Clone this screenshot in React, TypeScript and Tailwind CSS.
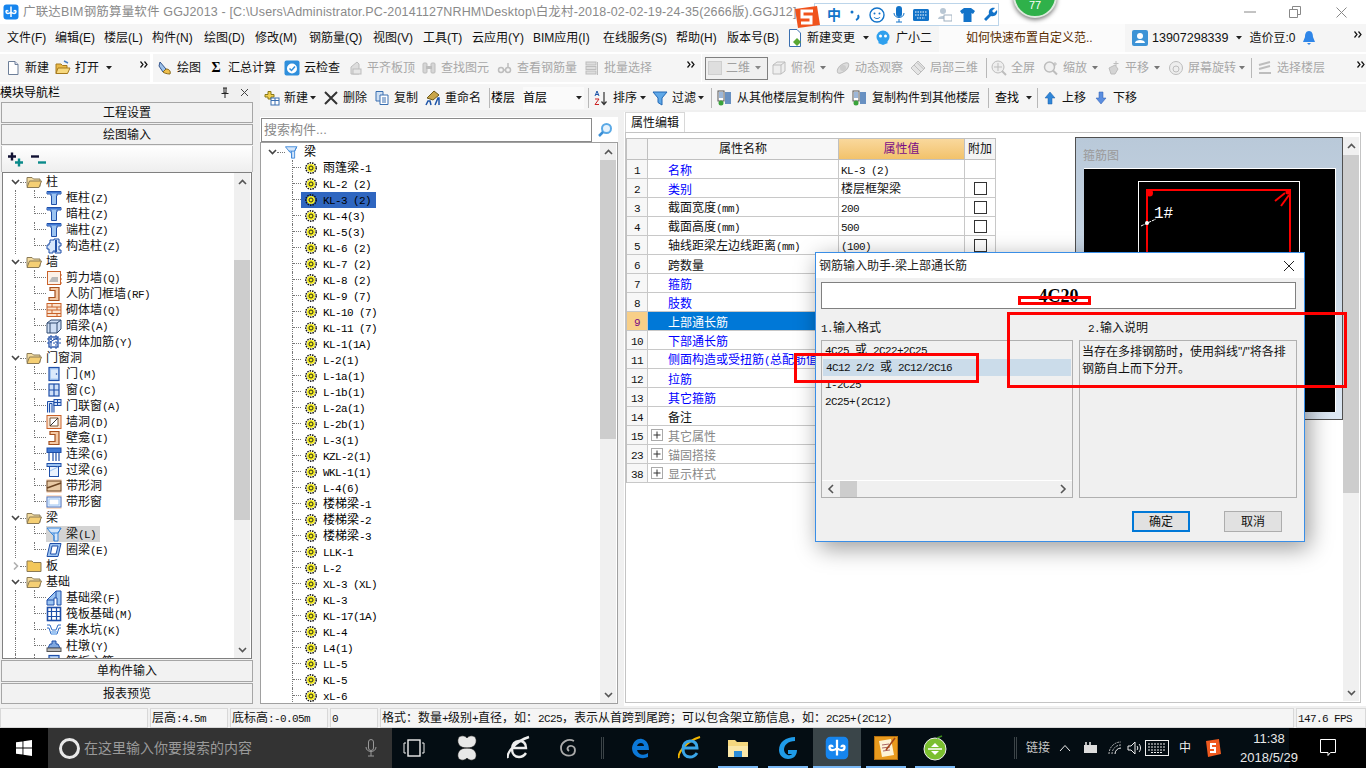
import React from "react";

function M({ t }: { t: string }) {
  const parts = t.split(/([\x20-\x7e]+)/);
  return (
    <span className="whitespace-pre">
      {parts.map((p, i) =>
        /^[\x20-\x7e]+$/.test(p) ? (
          <span key={i} className="text-[11px] tracking-[-0.6px] font-['Liberation_Mono',monospace]">{p}</span>
        ) : (
          <span key={i}>{p}</span>
        )
      )}
    </span>
  );
}

function S({ children, w = 16, h = 16, vb = "0 0 16 16", cls = "" }: { children: React.ReactNode; w?: number; h?: number; vb?: string; cls?: string }) {
  return (
    <svg width={w} height={h} viewBox={vb} className={"shrink-0 " + cls}>
      {children}
    </svg>
  );
}

function Caret({ cls = "" }: { cls?: string }) {
  return (
    <S w={6} h={4} vb="0 0 6 4" cls={cls}>
      <path d="M0 0H6L3 3.5Z" fill="#222" />
    </S>
  );
}

function More({ cls = "" }: { cls?: string }) {
  return (
    <S w={8} h={7} vb="0 0 8 7" cls={cls}>
      <path d="M0.5 0.5L3 3.5L0.5 6.5M4.5 0.5L7 3.5L4.5 6.5" fill="none" stroke="#111" strokeWidth="1.2" />
    </S>
  );
}

function Logo({ size = 16 }: { size?: number }) {
  return (
    <S w={size} h={size}>
      <rect x="0.5" y="0.5" width="15" height="15" rx="3" fill="#1685ee" />
      <path d="M8 2.5V13M3 7.5C3 10 6 10 8 8C10 10 13 10 13 7.5C13 6 11 6 11 7.5M3 7.5C3 6 5 6 5 7.5" fill="none" stroke="#fff" strokeWidth="1.5" />
    </S>
  );
}

const G = "#bdbdbd";

function ToolIcon({ k }: { k: string }) {
  switch (k) {
    case "doc":
      return <S><path d="M3.5 1.5H10L13 4.5V14.5H3.5Z" fill="#fff" stroke="#6d7f99" /><path d="M10 1.5V4.5H13" fill="#dde" stroke="#6d7f99" /></S>;
    case "open":
      return <S><path d="M1 4H6L7.5 5.5H12V13.5H1Z" fill="#e9b949" stroke="#a67a1e" /><path d="M3 8H15L12.5 13.5H1Z" fill="#f7d97f" stroke="#a67a1e" /><path d="M9 1L13 3" stroke="#4a7fc1" strokeWidth="1.5" /></S>;
    case "draw":
      return <S><path d="M3 2L9 9L6 12L2 6Z" fill="#9cc1ea" stroke="#34558c" /><path d="M9 9C12 9 14 11 13 14C10 14 7 13 6 12Z" fill="#f0c04d" stroke="#8a6a1a" /></S>;
    case "sigma":
      return <span className="w-4 text-center text-[14px] font-bold leading-none font-['Liberation_Serif',serif] text-black">Σ</span>;
    case "cloud":
      return <S><rect x="0.5" y="0.5" width="15" height="15" rx="2" fill="#2f8fdc" /><circle cx="8" cy="8.5" r="5" fill="#fff" /><path d="M5.5 8.5L7.5 10.5L11 6.5" fill="none" stroke="#2f8fdc" strokeWidth="1.5" /></S>;
    case "g1":
      return <S><path d="M4 14V7L10 2L12 4V14Z" fill="#ddd" stroke={G} /><rect x="6" y="9" width="8" height="5" fill="#e6e6e6" stroke={G} /></S>;
    case "g2":
      return <S><rect x="2" y="3" width="4" height="10" rx="1" fill="#d6d6d6" stroke={G} /><rect x="10" y="3" width="4" height="10" rx="1" fill="#d6d6d6" stroke={G} /><rect x="5" y="6" width="6" height="3" fill={G} /></S>;
    case "g3":
      return <S><circle cx="4" cy="10" r="2.5" fill="none" stroke={G} strokeWidth="1.5" /><circle cx="11" cy="10" r="2.5" fill="none" stroke={G} strokeWidth="1.5" /><path d="M6 10H9M11 8V3" stroke={G} strokeWidth="1.5" /></S>;
    case "g4":
      return <S><rect x="2" y="2" width="10" height="3" fill="#ddd" stroke={G} /><rect x="2" y="6.5" width="10" height="3" fill="#ddd" stroke={G} /><rect x="2" y="11" width="10" height="3" fill="#ddd" stroke={G} /><path d="M13.5 2V15" stroke={G} /></S>;
    case "cube":
      return <S><path d="M2 5L6 2H14V11L10 14H2Z" fill="#eee" stroke={G} /><path d="M2 5H10V14M10 5L14 2" fill="none" stroke={G} /></S>;
    case "orbit":
      return <S><ellipse cx="8" cy="8" rx="7" ry="3.5" transform="rotate(-40 8 8)" fill="#ddd" stroke={G} /><circle cx="8" cy="8" r="3" fill="#ccc" /></S>;
    case "local":
      return <S><path d="M8 1L15 8L8 15L1 8Z" fill="#e4e4e4" stroke={G} /><path d="M4 5L11 12M7 2.5L13.5 9" stroke={G} /></S>;
    case "full":
      return <S><circle cx="7" cy="7" r="6" fill="#eee" stroke={G} /><path d="M7 3V11M3 7H11" stroke={G} /><path d="M11 11L15 15" stroke={G} strokeWidth="2" /></S>;
    case "zoom":
      return <S><circle cx="6.5" cy="7" r="5" fill="#f0f0f0" stroke={G} strokeWidth="1.5" /><path d="M10 10.5L14 14.5" stroke={G} strokeWidth="2" /><path d="M12 2V6M10 4H14" stroke={G} /></S>;
    case "pan":
      return <S><path d="M4 8L10 5L13 9L10 14H6Z" fill="#d4d4d4" stroke={G} /><path d="M11 1V6M8.5 3.5H13.5" stroke={G} /></S>;
    case "rotate":
      return <S><circle cx="8" cy="8" r="6.5" fill="#eee" stroke={G} /><circle cx="8" cy="9" r="3" fill="none" stroke={G} /></S>;
    case "floors":
      return <S><path d="M2 5L13 2M2 9L13 6M2 13H14" stroke={G} strokeWidth="2" /></S>;
    case "new":
      return <S><path d="M4 1.5H7V4.5H10V7H7V9H4V7H1V4.5H4Z" fill="#f2d04f" stroke="#8a7a1a" /><rect x="7" y="8" width="8" height="7" fill="#fff" stroke="#3a6fb0" /><path d="M7 10.5H15M11 8V15" stroke="#3a6fb0" /></S>;
    case "x":
      return <S><path d="M2 2L14 14M14 2L2 14" stroke="#333" strokeWidth="2" /></S>;
    case "copy":
      return <S><path d="M2 1.5H9V11H2Z" fill="#cfe0f3" stroke="#3a6fb0" /><path d="M6 5H14V14.5H6Z" fill="#fff" stroke="#3a6fb0" /><path d="M8 8H12M8 10H12M8 12H12" stroke="#3a6fb0" /></S>;
    case "rename":
      return <S><path d="M2 8L9 1L14 5L8 10Z" fill="#c9a64a" stroke="#6e5a1a" /><path d="M1 15L3 11H5L6 15M10 15L13 8H14V15" fill="none" stroke="#1f55a8" strokeWidth="1.5" /></S>;
    case "sort":
      return <S><path d="M2 6L4 1L6 6M2.8 4.5H5.2" fill="none" stroke="#1f55a8" /><path d="M2 9H6L2 14.5H6" fill="none" stroke="#c22" /><path d="M11 2V14M8.5 11.5L11 14.5L13.5 11.5" fill="none" stroke="#333" strokeWidth="1.2" /></S>;
    case "filter":
      return <S><path d="M1 2H15L10 8V15L6 12.5V8Z" fill="#5fa8e8" stroke="#2268b5" /></S>;
    case "stackA":
      return <S><rect x="1" y="1" width="6" height="10" fill="#fff" stroke="#555" /><path d="M2 3H6M2 5H6M2 7H6" stroke="#3a6fb0" /><path d="M9 2V14M11 2V14M13 2V14" stroke="#3a6fb0" strokeWidth="1.5" /><circle cx="4" cy="13" r="2.5" fill="#3aa33a" /></S>;
    case "up":
      return <S><path d="M8 2L13 8H10V14H6V8H3Z" fill="#2f86d8" stroke="#1e5fa8" strokeWidth="0.5" /></S>;
    case "down":
      return <S><path d="M8 14L13 8H10V2H6V8H3Z" fill="#5b8ee0" stroke="#2a5ab0" strokeWidth="0.5" /></S>;
    default:
      return <S><rect x="2" y="2" width="12" height="12" fill="none" stroke={G} /></S>;
  }
}

function Btn({ w, k, t, off, caret }: { w: string; k: string; t: string; off?: boolean; caret?: string }) {
  return (
    <div className={"flex items-center shrink-0 " + w}>
      <span className="w-4 flex justify-center shrink-0"><ToolIcon k={k} /></span>
      <span className={"ml-1 whitespace-nowrap " + (off ? "text-[#a8a8a8]" : "text-[#111]")}>{t}</span>
      {caret && <Caret cls={caret} />}
    </div>
  );
}

function Sep({ cls = "" }: { cls?: string }) {
  return <div className={"w-px h-5 bg-[#b8b8b8] shrink-0 " + cls} />;
}

const menuItems: [string, string][] = [
  ["文件(F)", "w-[48px]"], ["编辑(E)", "w-[49px]"], ["楼层(L)", "w-[48px]"], ["构件(N)", "w-[52px]"],
  ["绘图(D)", "w-[51px]"], ["修改(M)", "w-[54px]"], ["钢筋量(Q)", "w-[64px]"], ["视图(V)", "w-[50px]"],
  ["工具(T)", "w-[49px]"], ["云应用(Y)", "w-[61px]"], ["BIM应用(I)", "w-[70px]"], ["在线服务(S)", "w-[73px]"],
  ["帮助(H)", "w-[51px]"], ["版本号(B)", "w-[60px]"],
];

function TreeIcon({ k }: { k: string }) {
  const b = "#1f4fa8";
  const l = "#9cc4f2";
  const o = "#c9622a";
  switch (k) {
    case "t":
      return <S><path d="M1 1.5H15V4H11V6H10.5V14.5H5.5V6H5V4H1Z" fill={l} stroke={b} /><rect x="1.5" y="2" width="13" height="1.5" fill="#3f78d4" /></S>;
    case "gz":
      return <S><path d="M4 2H8V1H13V5H15V8H13V12H15V15H9V13H7V15H3V11H1V7H3V5H4Z" fill="#d7e6fa" stroke={b} /><path d="M10 2V14" stroke={b} strokeWidth="2" /></S>;
    case "w1":
      return <S><rect x="1.5" y="1.5" width="13" height="13" fill="#fdf2e8" stroke={o} /><path d="M3 12L12 12L12 7L6 7Z" fill="#b9b9b9" /><path d="M14 5H16M14 9H16M14 13H16" stroke={o} /></S>;
    case "w2":
      return <S><path d="M4 1.5H13V14.5H3V11.5H9V4.5H4Z" fill="#f5c9a4" stroke="#a5501e" strokeWidth="1.2" /></S>;
    case "brick":
      return <S><rect x="1" y="1.5" width="14" height="13" fill="#fbe3cf" stroke={o} /><path d="M1 5H15M1 8H15M1 11.5H15M6 1.5V5M11 5V8M6 8V11.5M11 11.5V14.5" stroke={o} /></S>;
    case "beam3d":
      return <S><path d="M1 5L5 2H15V11L11 15H1Z" fill="#cfdff5" stroke="#314a70" /><path d="M1 5H11V15M11 5L15 2M4 5V15" fill="none" stroke="#314a70" /></S>;
    case "rebar":
      return <S><rect x="3" y="3" width="9" height="10" fill="#fff" stroke={b} strokeWidth="1.3" /><path d="M1 5H15M1 9H15M5 1V15M10 1V15" stroke={b} strokeDasharray="2 1" /><path d="M4 8L11 4" stroke={b} /></S>;
    case "door":
      return <S><rect x="3" y="1.5" width="10" height="13" fill="#a9c9f2" stroke={b} strokeWidth="1.2" /><rect x="5" y="3.5" width="7" height="9" fill="#dbe9fb" /><circle cx="10.5" cy="8" r="0.8" fill={b} /></S>;
    case "win":
      return <S><rect x="3" y="2" width="10" height="12" fill="#cfe0f8" stroke={b} strokeWidth="1.2" /><path d="M8 2V14M3 8H13" stroke={b} strokeWidth="1.2" /></S>;
    case "dw":
      return <S><path d="M1.5 14.5V3.5H8V14.5M3.5 14.5V5.5H6V14.5" fill="#d8e6fa" stroke={b} /><rect x="8" y="1.5" width="7" height="6" fill="#cfe0f8" stroke={b} /><path d="M11.5 1.5V7.5M8 4.5H15" stroke={b} /></S>;
    case "hole":
      return <S><rect x="1" y="1.5" width="14" height="13" fill="#fbe3cf" stroke={o} /><path d="M4 4H12V12H4Z" fill="#fff" stroke="#7a5a3a" /><path d="M4 12L12 4" stroke="#333" /></S>;
    case "lian":
      return <S><rect x="1" y="2" width="14" height="4.5" fill="#3f78d4" stroke={b} /><path d="M3 6V15M7 6V15M10 6V15M13 6V15" stroke={b} strokeWidth="1.2" /></S>;
    case "guo":
      return <S><rect x="1" y="1.5" width="14" height="3" fill="#9cc4f2" stroke={b} /><rect x="3.5" y="4.5" width="9" height="10" fill="#eaf2fd" stroke={b} /><path d="M4 9L12 5" stroke={l} /></S>;
    case "b1":
      return <S><rect x="0.5" y="1" width="15" height="14" fill="#fbdcc5" /><rect x="1" y="3" width="14" height="10" fill="#e8c9a4" stroke="#6b4422" /><path d="M1 10L15 5" stroke="#6b4422" strokeWidth="1.5" /></S>;
    case "b2":
      return <S><rect x="0.5" y="1" width="15" height="14" fill="#fbdcc5" /><rect x="1" y="3" width="14" height="10" fill="#eaf2fd" stroke="#4a78c8" /><rect x="3" y="5" width="10" height="6" fill="#fff" stroke="#9cc4f2" /></S>;
    case "liang":
      return <S><path d="M1 2H15L12 7V15H8V10L5 7Z" fill="#d4e6fb" stroke="#3a86d8" /><path d="M5 7H12L15 2M8 7V15" fill="none" stroke="#3a86d8" /></S>;
    case "quan":
      return <S><path d="M4 1.5H15L12 14.5H1Z" fill="#9cc4f2" stroke={b} /><path d="M6 4H12L10 12H4.5Z" fill="#fff" stroke={b} /></S>;
    case "jcl":
      return <S><path d="M1 15V10L10 1H15V15H11V8H8V15Z" fill="#9cc4f2" stroke={b} /><path d="M10 1V8M1 10H8" stroke={b} /></S>;
    case "fab":
      return <S><rect x="1.5" y="1.5" width="13" height="13" fill="#fff" stroke={b} strokeWidth="1.6" /><path d="M5.5 1.5V14.5M10.5 1.5V14.5M1.5 5.5H14.5M1.5 10.5H14.5" stroke={b} strokeWidth="1.2" /></S>;
    case "jsk":
      return <S><path d="M1 3H4L6 8H10L12 3H15M1 6H3L5 12H11L13 6H15" fill="none" stroke="#2e6bc4" /><path d="M5 9H11L10 13H6Z" fill="#9cc4f2" /></S>;
    case "zd":
      return <S><path d="M6 3H10V6H12L14 10H2L4 6H6Z" fill="#7fa8e0" stroke={b} /><rect x="1" y="10" width="14" height="3.5" fill="#bbb" stroke="#555" /></S>;
    default:
      return <S><rect x="2" y="2" width="12" height="12" fill="#fff" stroke={b} /></S>;
  }
}

function Folder({ open }: { open: boolean }) {
  return (
    <S>
      {open ? (
        <>
          <path d="M1 3.5H6L7.5 5H14V12.5H1Z" fill="#f3dca0" stroke="#8b7a55" />
          <path d="M3.5 7H15.5L13 13.5H1Z" fill="#f5cf74" stroke="#8b7a55" />
        </>
      ) : (
        <path d="M1 3H6L7.5 4.5H15V13.5H1Z" fill="#f3c75a" stroke="#8b7a55" />
      )}
    </S>
  );
}

function Chev({ open }: { open: boolean }) {
  return (
    <S w={9} h={8} vb="0 0 9 8">
      {open ? (
        <path d="M1 2L4.5 5.5L8 2" fill="none" stroke="#444" strokeWidth="1.6" />
      ) : (
        <path d="M3 0.5L6.5 4L3 7.5" fill="none" stroke="#b0b0b0" strokeWidth="1.6" />
      )}
    </S>
  );
}

type Node = { t: string; k?: string; last?: boolean; closed?: boolean; sel?: boolean };

const leftTree: Node[] = [
  { t: "柱" }, { t: "框柱(Z)", k: "t" }, { t: "暗柱(Z)", k: "t" }, { t: "端柱(Z)", k: "t" }, { t: "构造柱(Z)", k: "gz", last: true },
  { t: "墙" }, { t: "剪力墙(Q)", k: "w1" }, { t: "人防门框墙(RF)", k: "w2" }, { t: "砌体墙(Q)", k: "brick" }, { t: "暗梁(A)", k: "beam3d" }, { t: "砌体加筋(Y)", k: "rebar", last: true },
  { t: "门窗洞" }, { t: "门(M)", k: "door" }, { t: "窗(C)", k: "win" }, { t: "门联窗(A)", k: "dw" }, { t: "墙洞(D)", k: "hole" }, { t: "壁龛(I)", k: "w2" }, { t: "连梁(G)", k: "lian" }, { t: "过梁(G)", k: "guo" }, { t: "带形洞", k: "b1" }, { t: "带形窗", k: "b2", last: true },
  { t: "梁" }, { t: "梁(L)", k: "liang", sel: true }, { t: "圈梁(E)", k: "quan", last: true },
  { t: "板", closed: true },
  { t: "基础" }, { t: "基础梁(F)", k: "jcl" }, { t: "筏板基础(M)", k: "fab" }, { t: "集水坑(K)", k: "jsk" }, { t: "柱墩(Y)", k: "zd" }, { t: "筏板主筋(R)", k: "door" },
];

const midItems = [
  "雨篷梁-1", "KL-2 (2)", "KL-3 (2)", "KL-4(3)", "KL-5(3)", "KL-6 (2)", "KL-7 (2)", "KL-8 (2)", "KL-9 (7)", "KL-10 (7)", "KL-11 (7)", "KL-1(1A)",
  "L-2(1)", "L-1a(1)", "L-1b(1)", "L-2a(1)", "L-2b(1)", "L-3(1)", "KZL-2(1)", "WKL-1(1)", "L-4(6)", "楼梯梁-1", "楼梯梁-2", "楼梯梁-3", "LLK-1", "L-2", "XL-3 (XL)", "KL-3", "KL-17(1A)", "KL-4", "L4(1)", "LL-5", "KL-5", "xL-6",
];

function ScrollV({ spacer, thumb, cls }: { spacer: string; thumb: string; cls: string }) {
  return (
    <div className={"flex flex-col bg-[#f0f0f0] shrink-0 " + cls}>
      <div className="h-[17px] flex items-center justify-center shrink-0">
        <S w={9} h={6} vb="0 0 9 6"><path d="M1 5L4.5 1.5L8 5" fill="none" stroke="#555" strokeWidth="1.6" /></S>
      </div>
      <div className={"shrink-0 " + spacer} />
      <div className={"bg-[#cdcdcd] shrink-0 " + thumb} />
      <div className="flex-1" />
      <div className="h-[17px] flex items-center justify-center shrink-0">
        <S w={9} h={6} vb="0 0 9 6"><path d="M1 1L4.5 4.5L8 1" fill="none" stroke="#555" strokeWidth="1.6" /></S>
      </div>
    </div>
  );
}

function LeftRow({ n }: { n: Node }) {
  if (!n.k) {
    return (
      <div className="h-4 flex items-center shrink-0">
        <span className="w-[9px] ml-[8px] flex justify-center"><Chev open={!n.closed} /></span>
        <span className="w-[6px] h-0 border-t border-dotted border-[#777]" />
        <Folder open={!n.closed} />
        <span className="ml-[4px]">{n.t}</span>
      </div>
    );
  }
  return (
    <div className="h-4 flex shrink-0">
      <div className="ml-[12px] w-[19px] h-4 border-l border-dotted border-[#777] shrink-0" />
      <div className={"w-[12px] h-2 border-l border-b border-dotted border-[#777] shrink-0"} />
      <div className={"flex items-center h-4 pr-[4px] " + (n.sel ? "bg-[#d4d4d4]" : "")}>
        <TreeIcon k={n.k} />
        <span className="ml-[4px] whitespace-nowrap"><M t={n.t} /></span>
      </div>
    </div>
  );
}

function LeftPanel() {
  const btn = "h-[21px] mx-[1px] mb-[1px] border border-[#a6a6a6] bg-[#f2f2f2] flex items-center justify-center text-[#111] shrink-0";
  return (
    <div className="w-[254px] shrink-0 flex flex-col">
      <div className="h-[17px] flex items-center text-[12px] text-black shrink-0 bg-[#f0f0f0]">
        <span>模块导航栏</span>
        <span className="ml-auto"><S w={10} h={11} vb="0 0 10 11"><path d="M3 1H7M4 1V6H6V1M1.5 6.5H8.5M5 6.5V11" fill="none" stroke="#222" /></S></span>
        <span className="ml-[10px] mr-[5px]"><S w={9} h={9} vb="0 0 9 9"><path d="M1 1L8 8M8 1L1 8" stroke="#444" /></S></span>
      </div>
      <div className={btn + " mt-[1px]"}>工程设置</div>
      <div className={btn}>绘图输入</div>
      <div className="h-[26px] mx-[1px] bg-gradient-to-b from-white to-[#eeeeee] border-x border-[#c0c0c0] flex items-center pl-[5px] gap-[6px] shrink-0">
        <S w={17} h={15} vb="0 0 17 15"><path d="M1 4.5H9M5 0.5V8.5" stroke="#113" strokeWidth="2.4" /><path d="M8 10.5H16M12 6.5V14.5" stroke="#0a8a8a" strokeWidth="2.4" /></S>
        <S w={17} h={15} vb="0 0 17 15"><path d="M1 4.5H9" stroke="#113" strokeWidth="2.4" /><path d="M8 10.5H16" stroke="#0a8a8a" strokeWidth="2.4" /></S>
      </div>
      <div className="h-[487px] mx-[2px] border border-[#808080] flex bg-white shrink-0 overflow-hidden">
        <div className="flex-1 pt-[1px] overflow-hidden flex flex-col text-[#111]">
          {leftTree.map((n, i) => <LeftRow key={i} n={n} />)}
        </div>
        <ScrollV cls="w-[16px] h-full mr-px" spacer="h-[70px]" thumb="h-[260px]" />
      </div>
      <div className={btn + " mt-[1px] h-[22px]"}>单构件输入</div>
      <div className={btn}>报表预览</div>
    </div>
  );
}

function MidPanel() {
  return (
    <div className="w-[358px] shrink-0 flex flex-col mt-[7px]">
      <div className="h-[25px] flex items-center shrink-0 bg-white">
        <div className="w-[331px] ml-px h-[24px] border border-[#8a8a8a] text-[#8a8a8a] text-[13px] flex items-center pl-[2px]">搜索构件...</div>
        <S w={16} h={16} cls="ml-[5px]"><circle cx="9.5" cy="6.5" r="4.5" fill="#e6f2fc" stroke="#5aa9e6" strokeWidth="2" /><path d="M6 10L2 14" stroke="#3b8fd6" strokeWidth="2.5" /></S>
      </div>
      <div className="h-[562px] border border-[#a0a0a0] flex bg-white shrink-0 overflow-hidden">
        <div className="flex-1 overflow-hidden flex flex-col pt-px text-black">
          <div className="h-4 flex items-center shrink-0">
            <span className="ml-[7px] w-[9px]"><Chev open /></span>
            <span className="w-[8px] h-0 border-t border-dotted border-[#777]" />
            <S w={14} h={16}><path d="M0.5 2H13.5L11 7V15H7.5V10L4.5 7Z" fill="#d4e6fb" stroke="#3a86d8" /><path d="M4.5 7H11L13.5 2M7.5 7V15" fill="none" stroke="#3a86d8" /></S>
            <span className="ml-[5px]">梁</span>
          </div>
          {midItems.map((t, i) => (
            <div key={i} className="h-4 flex shrink-0">
              <div className="ml-[31px] w-[9px] border-l border-dotted border-[#777] h-4 shrink-0 flex">
                <div className="w-full h-2 border-b border-dotted border-[#777]" />
              </div>
              <div className={"flex items-center h-4 pl-[4px] pr-[5px] " + (i === 2 ? "bg-[#2f66c0]" : "")}>
                <S w={12} h={12} vb="0 0 12 12">
                  <circle cx="6" cy="6" r="5.2" fill="none" stroke="#111" strokeWidth="1.5" strokeDasharray="1.5 1" />
                  <circle cx="6" cy="6" r="4" fill="#f6ef1f" />
                  <circle cx="6" cy="6" r="2" fill="none" stroke="#222" />
                </S>
                <span className="ml-[6px] whitespace-nowrap"><M t={t} /></span>
              </div>
            </div>
          ))}
        </div>
        <ScrollV cls="w-[16px] h-full mr-px" spacer="h-0" thumb="h-[279px]" />
      </div>
    </div>
  );
}

type R = { n: string; c: string; name: string; v?: string; box?: boolean; plus?: boolean; sel?: boolean };
const rows: R[] = [
  { n: "1", c: "text-[#0000ff]", name: "名称", v: "KL-3 (2)" },
  { n: "2", c: "text-[#0000ff]", name: "类别", v: "楼层框架梁", box: true },
  { n: "3", c: "text-[#111]", name: "截面宽度(mm)", v: "200", box: true },
  { n: "4", c: "text-[#111]", name: "截面高度(mm)", v: "500", box: true },
  { n: "5", c: "text-[#111]", name: "轴线距梁左边线距离(mm)", v: "(100)", box: true },
  { n: "6", c: "text-[#111]", name: "跨数量" },
  { n: "7", c: "text-[#0000ff]", name: "箍筋" },
  { n: "8", c: "text-[#0000ff]", name: "肢数" },
  { n: "9", c: "text-white", name: "上部通长筋", sel: true },
  { n: "10", c: "text-[#0000ff]", name: "下部通长筋" },
  { n: "11", c: "text-[#0000ff]", name: "侧面构造或受扭筋(总配筋值)" },
  { n: "12", c: "text-[#0000ff]", name: "拉筋" },
  { n: "13", c: "text-[#0000ff]", name: "其它箍筋" },
  { n: "14", c: "text-[#111]", name: "备注" },
  { n: "15", c: "text-[#888888]", name: "其它属性", plus: true },
  { n: "23", c: "text-[#888888]", name: "锚固搭接", plus: true },
  { n: "38", c: "text-[#888888]", name: "显示样式", plus: true },
];

function PropTable() {
  return (
    <div className="w-[370px] mt-[5px] border-l border-[#c0c0c0] shrink-0 self-start">
      <div className="h-[22px] flex border-y border-[#c0c0c0] text-[#111]">
        <div className="w-[21px] border-r border-[#c0c0c0] bg-[#f4f4f4]" />
        <div className="w-[191px] border-r border-[#c0c0c0] bg-[#f7f7f7] flex items-center justify-center">属性名称</div>
        <div className="w-[126px] border-r border-[#c0c0c0] bg-gradient-to-b from-[#f9d89c] to-[#f2c26a] flex items-center justify-center text-[#7a0c86]">属性值</div>
        <div className="w-[31px] border-r border-[#c0c0c0] bg-[#f4f4f4] flex items-center justify-center">附加</div>
      </div>
      {rows.map((r) => (
        <div key={r.n} className="h-[19px] flex border-b border-[#c8c8c8]">
          <div className={"w-[21px] border-r border-[#c8c8c8] pt-[2px] flex items-center justify-center " + (r.sel ? "bg-[#f8cf88] text-[#7a0c86]" : "bg-[#f7f7f7] text-[#111]")}><M t={r.n} /></div>
          <div className={"w-[191px] border-r border-[#c8c8c8] pt-[3px] flex items-center overflow-hidden whitespace-nowrap " + r.c + (r.sel ? " bg-[#0078d7]" : "") + (r.plus ? " pl-[3px]" : " pl-5")}>
            {r.plus && (
              <S w={12} h={12} vb="0 0 12 12" cls="mr-[5px] -mt-[3px]"><rect x="0.5" y="0.5" width="11" height="11" fill="#fff" stroke="#aaa" /><path d="M2.5 6H9.5M6 2.5V9.5" stroke="#333" /></S>
            )}
            <M t={r.name} />
          </div>
          <div className="w-[126px] border-r border-[#c8c8c8] pt-[2px] flex items-center pl-[2px] text-[#111] overflow-hidden whitespace-nowrap">{r.v && <M t={r.v} />}</div>
          <div className="w-[31px] border-r border-[#c8c8c8] flex items-center justify-center">
            {r.box && <div className="w-[13px] h-[13px] border border-[#333] bg-white" />}
          </div>
        </div>
      ))}
    </div>
  );
}

function Diagram() {
  return (
    <div className="w-[268px] h-[283px] mt-[4px] ml-[79px] shrink-0 border border-[#505050] bg-gradient-to-b from-[#b9c9d9] to-[#dde8f4] flex flex-col">
      <div className="h-[30px] pl-[7px] pt-[6px] text-[#9a9a9a] shrink-0 flex items-center">箍筋图</div>
      <div className="ml-[8px] w-[252px] h-[244px] bg-black border-t border-r border-white">
        <svg width="250" height="243" viewBox="0 0 250 243">
          <rect x="54.5" y="12.5" width="161" height="215" fill="none" stroke="#fff" />
          <rect x="63" y="21" width="143" height="200" fill="none" stroke="#f00" strokeWidth="2" />
          <circle cx="65.5" cy="24" r="3.5" fill="#f00" />
          <circle cx="204" cy="23" r="2.5" fill="#f00" />
          <path d="M201 24L191 32M205 26L197 37" stroke="#f00" strokeWidth="2" />
          <text x="70" y="49" fill="#fff" fontSize="16" fontFamily="Liberation Mono, monospace">1#</text>
          <path d="M57 57L72 50" stroke="#fff" strokeDasharray="3 1" />
          <circle cx="63" cy="54" r="2" fill="#fff" />
        </svg>
      </div>
    </div>
  );
}

function RightPanel() {
  return (
    <div className="w-[742px] shrink-0 ml-[6px] mt-[2px] bg-white flex flex-col">
      <div className="h-[20px] flex shrink-0">
        <div className="w-[60px] ml-px border-x border-t border-[#d8d8d8] flex items-center justify-center text-[#111]">属性编辑</div>
      </div>
      <div className="h-[571px] mr-[5px] ml-px border border-[#c4c4c4] flex bg-white shrink-0 overflow-hidden">
        <PropTable />
        <Diagram />
        <ScrollV cls="w-[16px] mt-[4px] h-[564px]" spacer="h-px" thumb="h-[338px]" />
      </div>
    </div>
  );
}

function RedBox({ cls }: { cls: string }) {
  return <div className={"absolute border-[3px] border-[#ff0000] " + cls} />;
}

function Dialog() {
  return (
    <div className="absolute left-[815px] top-[252px] w-[490px] h-[290px] border border-[#3a8ee6] bg-[#f0f0f0] shadow-[4px_6px_22px_rgba(0,0,0,0.4)] flex flex-col">
      <div className="h-[25px] bg-white flex items-center pl-[3px] text-[#222] shrink-0">
        <span>钢筋输入助手-梁上部通长筋</span>
        <S w={12} h={12} vb="0 0 12 12" cls="ml-auto mr-[9px]"><path d="M1 1L11 11M11 1L1 11" stroke="#222" /></S>
      </div>
      <div className="ml-[5px] mt-[4px] w-[475px] h-[27px] border border-[#808080] bg-white flex items-center justify-center text-[18px] font-bold text-black font-['Liberation_Serif',serif] shrink-0">4C20</div>
      <div className="h-[31px] flex shrink-0 items-center pt-[8px] text-[#111]">
        <span className="ml-[5px] w-[267px]"><M t="1.输入格式" /></span>
        <span><M t="2.输入说明" /></span>
      </div>
      <div className="flex ml-[5px] shrink-0">
        <div className="w-[252px] h-[158px] border border-[#b0b0b0] flex flex-col text-[#111]">
          <div className="flex-1 pt-px">
            <div className="h-[17px] pl-[3px] flex items-center"><M t="4C25 或 2C22+2C25" /></div>
            <div className="h-[17px] pl-[3px] flex items-center bg-[#cbdcea] mx-px"><M t="4C12 2/2 或 2C12/2C16" /></div>
            <div className="h-[17px] pl-[3px] flex items-center"><M t="1-2C25" /></div>
            <div className="h-[17px] pl-[3px] flex items-center"><M t="2C25+(2C12)" /></div>
          </div>
          <div className="h-[17px] flex items-center bg-[#f0f0f0] border-t border-white shrink-0">
            <S w={8} h={10} vb="0 0 8 10" cls="ml-[5px]"><path d="M6 1L2 5L6 9" fill="none" stroke="#555" strokeWidth="1.6" /></S>
            <div className="w-[17px] h-full bg-[#cdcdcd] ml-[5px]" />
            <S w={8} h={10} vb="0 0 8 10" cls="ml-auto mr-[5px]"><path d="M2 1L6 5L2 9" fill="none" stroke="#555" strokeWidth="1.6" /></S>
          </div>
        </div>
        <div className="w-[218px] h-[158px] ml-[6px] border border-[#b0b0b0] px-[2px] pt-[3px] leading-[17px] text-[#111]">
          当存在多排钢筋时，使用斜线"/"将各排<br />钢筋自上而下分开。
        </div>
      </div>
      <div className="flex mt-[13px] shrink-0 text-[#111]">
        <div className="ml-[316px] w-[58px] h-[21px] border-2 border-[#0078d7] bg-[#e1e1e1] flex items-center justify-center">确定</div>
        <div className="ml-[34px] w-[58px] h-[21px] border border-[#adadad] bg-[#e1e1e1] flex items-center justify-center">取消</div>
      </div>
    </div>
  );
}

function TaskIcon({ k }: { k: string }) {
  switch (k) {
    case "pin":
      return <S w={22} h={26} vb="0 0 22 26"><path d="M11 13C4 13 1 9 2 4C3 0 9 0 11 3C13 0 19 0 20 4C21 9 18 13 11 13C18 13 21 17 20 22C19 26 13 26 11 23C9 26 3 26 2 22C1 17 4 13 11 13Z" fill="#e8e8e8" stroke="#111" strokeWidth="0.6" /></S>;
    case "ie":
      return <S w={24} h={26} vb="0 0 24 26"><path d="M5 13H19C19 8 16 6 12 6C8 6 5 9 5 14C5 19 8 22 12 22C15 22 17 21 19 18M1 23C-1 19 8 6 22 2" fill="none" stroke="#eee" strokeWidth="2.4" /></S>;
    case "spiral":
      return <S w={22} h={22} vb="0 0 22 22"><path d="M16 4C10 1 3 5 3 11C3 17 9 20 14 18C18 16 18 10 14 9C10 8 8 12 11 14" fill="none" stroke="#aaa" strokeWidth="1.8" /></S>;
    case "edge":
      return <S w={20} h={22} vb="0 0 20 22"><path d="M2 11C3 4 8 1 12 2C17 3 19 8 19 13H7C8 18 14 19 18 16V20C12 23 2 20 2 11ZM7 9H14C14 5 8 5 7 9Z" fill="#0c78d8" /></S>;
    case "iec":
      return <S w={24} h={26} vb="0 0 24 26"><path d="M1 23C-1 19 8 6 22 2" fill="none" stroke="#f2b600" strokeWidth="2" /><path d="M5 13H19C19 8 16 6 12 6C8 6 5 9 5 14C5 19 8 22 12 22C15 22 17 21 19 18" fill="none" stroke="#3aa5e8" strokeWidth="3" /></S>;
    case "fold":
      return <S w={22} h={22} vb="0 0 22 22"><path d="M1 3H8L10 5H21V20H1Z" fill="#f5d77e" /><path d="M1 9H21V20H1Z" fill="#fbe7a8" /><path d="M7 14H15V20H7Z" fill="#2b8bd8" /></S>;
    case "g":
      return <S w={24} h={26} vb="0 0 24 26"><path d="M19 2C10 2 3 7 3 15C3 21 8 24 12 24C18 24 21 20 21 15H12V19H16C15 21 9 21 8 15C8 10 12 6 19 6Z" fill="#1f9be8" /></S>;
    case "note":
      return <S w={24} h={24} vb="0 0 24 24"><rect x="0.5" y="0.5" width="23" height="23" fill="#e89a1d" stroke="#b36f10" /><path d="M5 5L17 3L20 19L8 21Z" fill="#fdf3d6" /><path d="M8 9L15 8M8 12L16 11M9 15L16 14" stroke="#a66" /><path d="M21 2L12 14" stroke="#a3441a" strokeWidth="1.6" /></S>;
    case "ball":
      return <S w={24} h={26} vb="0 0 24 26"><circle cx="12" cy="14" r="11" fill="#7bbf2f" stroke="#eee" /><path d="M5 14H19" stroke="#fff" strokeWidth="1.5" /><path d="M12 8L8 12H16ZM12 20L8 16H16Z" fill="#fff" /><path d="M14 3L19 1" stroke="#3a8a1a" strokeWidth="1.5" /></S>;
    case "blue":
      return <Logo size={24} />;
    default:
      return null;
  }
}

function TaskCell({ k, cls, line }: { k: string; cls: string; line?: boolean }) {
  return (
    <div className={"h-full flex items-center justify-center shrink-0 relative " + cls}>
      <TaskIcon k={k} />
      {line && <div className="absolute bottom-0 left-0 right-0 h-[2px] bg-[#7ab8f5]" />}
    </div>
  );
}

function Taskbar() {
  return (
    <div className="h-[40px] bg-[#040d13] flex items-center shrink-0">
      <div className="w-[48px] h-full bg-black flex items-center justify-center shrink-0">
        <S w={16} h={16}><path d="M0 2.3L6.5 1.4V7.6H0ZM7.4 1.2L16 0V7.6H7.4ZM0 8.4H6.5V14.6L0 13.7ZM7.4 8.4H16V16L7.4 14.8Z" fill="#fff" /></S>
      </div>
      <div className="w-[344px] h-full bg-[#333333] flex items-center shrink-0">
        <div className="ml-[11px] w-[21px] h-[21px] rounded-full border-[3px] border-[#e8e8e8]" />
        <span className="ml-[4px] text-[14px] text-[#9a9a9a]">在这里输入你要搜索的内容</span>
        <S w={12} h={18} vb="0 0 12 18" cls="ml-auto mr-[15px]"><rect x="3.5" y="0.5" width="5" height="11" rx="2.5" fill="none" stroke="#999" /><path d="M1 8C1 14 11 14 11 8M6 13V17M3 17H9" fill="none" stroke="#999" /></S>
      </div>
      <S w={22} h={18} vb="0 0 22 18" cls="ml-[11px]"><rect x="5" y="1" width="12" height="16" fill="none" stroke="#eee" strokeWidth="1.4" /><path d="M3 4H1V14H3M19 4H21V14H19" fill="none" stroke="#eee" /></S>
      <TaskCell k="pin" cls="ml-[27px] w-[30px]" />
      <TaskCell k="ie" cls="ml-[22px] w-[30px]" />
      <TaskCell k="spiral" cls="ml-[20px] w-[30px]" />
      <div className="ml-[17px] w-[3px] h-[22px] border-x border-[#3c4448]" />
      <TaskCell k="edge" cls="ml-[17px] w-[38px]" />
      <TaskCell k="iec" cls="ml-[11px] w-[40px]" />
      <TaskCell k="fold" cls="ml-[8px] w-[40px]" line />
      <TaskCell k="g" cls="ml-[10px] w-[40px]" line />
      <TaskCell k="blue" cls="ml-[5px] w-[48px] bg-[#3a4549]" line />
      <TaskCell k="note" cls="ml-[5px] w-[40px]" line />
      <TaskCell k="ball" cls="ml-[9px] w-[40px]" line />
      <div className="ml-[59px] w-[3px] h-[22px] border-x border-[#3c4448] shrink-0" />
      <span className="ml-[9px] text-[#c8c8c8] shrink-0">链接</span>
      <S w={12} h={8} vb="0 0 12 8" cls="ml-[9px]"><path d="M1 7L6 1.5L11 7" fill="none" stroke="#eee" /></S>
      <S w={16} h={14} vb="0 0 16 14" cls="ml-[11px]"><rect x="2" y="4" width="13" height="8" fill="#ddd" /><path d="M4 1V4M8 1V4" stroke="#eee" strokeWidth="1.5" /></S>
      <S w={16} h={16} cls="ml-[9px]"><path d="M2 14A12 12 0 0 1 14 2M5 14A9 9 0 0 1 14 5" fill="none" stroke="#bbb" strokeDasharray="2 1" /><path d="M8 14A6 6 0 0 1 14 8" fill="none" stroke="#eee" /></S>
      <S w={16} h={14} vb="0 0 16 14" cls="ml-[4px]"><path d="M1 5H4L8 1V13L4 9H1Z" fill="none" stroke="#eee" /><path d="M10 5C11 6 11 8 10 9M12 3C14 5 14 9 12 11" fill="none" stroke="#eee" /></S>
      <S w={24} h={16} vb="0 0 24 16" cls="ml-[2px]"><rect x="0.5" y="0.5" width="23" height="15" fill="none" stroke="#eee" /><path d="M3 4H21M3 7H21M3 10H21M6 12.5H18" stroke="#eee" strokeDasharray="2 1" /></S>
      <span className="ml-[4px] w-[24px] text-center text-[#eee] shrink-0">中</span>
      <S w={16} h={18} vb="0 0 16 18" cls="ml-[8px]"><path d="M1 2L14 0L16 15L3 18Z" fill="#ef5a1f" /><path d="M11 5H6V9H10V13H5" fill="none" stroke="#fff" strokeWidth="2" /></S>
      <div className="ml-[8px] w-[70px] pl-[10px] h-full flex flex-col items-center justify-center text-[#e8e8e8] shrink-0 gap-[5px] leading-[14px] relative z-10">
        <span className="text-[13px]">11:38</span>
        <span className="text-[13px]">2018/5/29</span>
      </div>
      <div className="flex-1 -ml-[10px] h-full bg-black flex items-center justify-center">
        <S w={16} h={18} vb="0 0 16 18"><path d="M0.5 0.5H15.5V13.5H10.5L8 16.5V13.5H0.5Z" fill="none" stroke="#fff" /></S>
      </div>
    </div>
  );
}

export default function App() {
  return (
    <div className="relative w-[1366px] h-[768px] overflow-hidden flex flex-col bg-white text-[12px] leading-none font-['Liberation_Sans','Noto_Sans_CJK_SC',sans-serif]">
      {/* title */}
      <div className="h-[24px] flex items-center bg-white shrink-0 text-[#8a8a8a] whitespace-nowrap">
        <span className="ml-[3px]"><Logo /></span>
        <span className="ml-[4px] text-[12.5px] tracking-[0.16px]">{"广联达BIM钢筋算量软件 GGJ2013 - [C:\\Users\\Administrator.PC-20141127NRHM\\Desktop\\白龙村-2018-02-02-19-24-35(2666版).GGJ12]"}</span>
        <S w={12} h={2} vb="0 0 12 2" cls="ml-auto mr-[33px]"><path d="M0 1H12" stroke="#888" /></S>
        <S w={12} h={12} vb="0 0 12 12" cls="mr-[35px]"><path d="M0.5 3.5H8.5V11.5H0.5ZM3.5 3.5V0.5H11.5V8.5H8.5" fill="none" stroke="#888" /></S>
        <S w={11} h={11} vb="0 0 11 11" cls="mr-[19px]"><path d="M0.5 0.5L10.5 10.5M10.5 0.5L0.5 10.5" stroke="#888" /></S>
      </div>
      {/* menu */}
      <div className="h-[28px] flex items-center bg-[#f5f5f5] shrink-0 text-[#111] pl-[7px] whitespace-nowrap">
        {menuItems.map(([t, w]) => (
          <span key={t} className={"shrink-0 " + w}>{t}</span>
        ))}
        <S w={16} h={18} vb="0 0 16 18"><path d="M2.5 0.5H10L13.5 4V17.5H2.5Z" fill="#fff" stroke="#3a6fb0" /><path d="M10 9L14 13L10 17L6 13Z" fill="#5aa832" /></S>
        <span className="ml-[4px] w-[51px] shrink-0">新建变更</span>
        <Caret cls="ml-[5px]" />
        <S w={16} h={16} cls="ml-[6px]"><circle cx="8" cy="7" r="6.5" fill="#2ea0ee" /><circle cx="5.5" cy="6" r="1.5" fill="#fff" /><circle cx="10.5" cy="6" r="1.5" fill="#fff" /><path d="M3 13L5 11H11L13 13L8 15Z" fill="#2ea0ee" /></S>
        <span className="ml-[5px] w-[43px] shrink-0">广小二</span>
        <div className="w-[186px] h-full bg-[#fbfbfb] flex items-center pl-[27px] text-[#5a2d00] shrink-0">如何快速布置自定义范..</div>
        <S w={16} h={16} cls="ml-[7px]"><rect x="0" y="0" width="16" height="16" rx="2" fill="#3d93d6" /><circle cx="8" cy="6" r="3" fill="#fff" /><path d="M3 13C3 9 13 9 13 13Z" fill="#fff" /></S>
        <span className="ml-[4px] text-[12.5px]">13907298339</span>
        <Caret cls="ml-[8px]" />
        <span className="ml-[7px]">造价豆:0</span>
        <S w={14} h={16} vb="0 0 14 16" cls="ml-[6px]"><path d="M7 1C10 1 11 4 11 7L13 12H1L3 7C3 4 4 1 7 1ZM5 13H9L7 15Z" fill="#2f86e8" /></S>
        <More cls="ml-auto mr-[4px] mb-[8px]" />
      </div>
      <div className="h-[2px] shrink-0" />
      {/* toolbar 1 */}
      <div className="h-[28px] flex shrink-0 whitespace-nowrap">
        <div className="w-[150px] bg-[#f5f5f5] flex items-center pl-[5px] shrink-0">
          <Btn w="w-[50px]" k="doc" t="新建" />
          <Btn w="w-[51px]" k="open" t="打开" />
          <Caret />
          <More cls="ml-[28px] mb-[8px]" />
        </div>
        <div className="w-[548px] ml-[3px] bg-[#f5f5f5] flex items-center pl-[4px] shrink-0">
          <Btn w="w-[51px]" k="draw" t="绘图" />
          <Btn w="w-[76px]" k="sigma" t="汇总计算" />
          <Btn w="w-[63px]" k="cloud" t="云检查" />
          <Btn w="w-[74px]" k="g1" t="平齐板顶" off />
          <Btn w="w-[76px]" k="g2" t="查找图元" off />
          <Btn w="w-[87px]" k="g3" t="查看钢筋量" off />
          <Btn w="w-[70px]" k="g4" t="批量选择" off />
          <More cls="ml-auto mr-[6px] mb-[8px]" />
        </div>
        <div className="flex-1 ml-px bg-[#f5f5f5] flex items-center pl-[3px]">
          <div className="w-[63px] h-[23px] border border-[#808080] bg-[#f0f0f0] flex items-center pl-[2px] text-[#a0a0a0] shrink-0">
            <div className="w-[14px] h-[14px] bg-[#dedede] border border-[#cfcfcf]" />
            <span className="ml-[4px]">二维</span>
            <Caret cls="ml-[5px] opacity-50" />
          </div>
          <div className="w-[3px] shrink-0" />
          <Btn w="w-[64px]" k="cube" t="俯视" off caret="ml-[5px] opacity-60" />
          <Btn w="w-[75px]" k="orbit" t="动态观察" off />
          <Btn w="w-[76px]" k="local" t="局部三维" off />
          <Sep />
          <div className="w-[4px] shrink-0" />
          <Btn w="w-[52px]" k="full" t="全屏" off />
          <Btn w="w-[62px]" k="zoom" t="缩放" off caret="ml-[5px] opacity-60" />
          <Btn w="w-[63px]" k="pan" t="平移" off caret="ml-[5px] opacity-60" />
          <Btn w="w-[83px]" k="rotate" t="屏幕旋转" off caret="ml-[3px] opacity-60" />
          <Sep />
          <div className="w-[5px] shrink-0" />
          <Btn w="w-[100px]" k="floors" t="选择楼层" off />
          <More cls="mb-[8px]" />
        </div>
      </div>
      <div className="h-[2px] shrink-0" />
      {/* body */}
      <div className="h-[622px] flex bg-[#f0f0f0] shrink-0">
        <LeftPanel />
        <div className="w-[1112px] ml-0 shrink-0 flex flex-col">
          <div className="h-[26px] ml-[6px] pt-[2px] bg-[#f5f5f5] flex items-center shrink-0 whitespace-nowrap">
            <div className="w-[4px] shrink-0" />
            <Btn w="w-[59px]" k="new" t="新建" caret="ml-[2px]" />
            <Btn w="w-[51px]" k="x" t="删除" />
            <Btn w="w-[51px]" k="copy" t="复制" />
            <Btn w="w-[64px]" k="rename" t="重命名" />
            <Sep />
            <span className="ml-[1px] w-[32px]">楼层</span>
            <div className="w-[61px] h-[22px] bg-[#fafafa] flex items-center shrink-0">
              <span>首层</span>
              <Caret cls="ml-[29px]" />
            </div>
            <div className="w-[4px] shrink-0" />
            <Sep />
            <div className="w-[4px] shrink-0" />
            <Btn w="w-[59px]" k="sort" t="排序" caret="ml-[3px]" />
            <Btn w="w-[59px]" k="filter" t="过滤" caret="ml-[2px]" />
            <Sep />
            <div className="w-[5px] shrink-0" />
            <Btn w="w-[135px]" k="stackA" t="从其他楼层复制构件" />
            <Btn w="w-[136px]" k="stackA" t="复制构件到其他楼层" />
            <Sep />
            <span className="ml-[6px] w-[31px]">查找</span>
            <Caret />
            <div className="w-[4px] shrink-0" />
            <Sep cls="ml-[1px]" />
            <div className="w-[4px] shrink-0" />
            <Btn w="w-[51px]" k="up" t="上移" />
            <Btn w="w-[50px]" k="down" t="下移" />
          </div>
          <div className="flex-1 flex pl-[6px] bg-[#f0f0f0]">
            <MidPanel />
            <RightPanel />
          </div>
        </div>
      </div>
      <div className="h-[2px] shrink-0 bg-[#f0f0f0]" />
      {/* status */}
      <div className="h-[20px] flex shrink-0 bg-[#f0f0f0] text-[#111] gap-[2px] whitespace-nowrap">
        <div className="w-[148px] bg-[#f5f5f5] border border-[#d8d8d8] shrink-0" />
        <div className="w-[78px] bg-[#f5f5f5] border border-[#d8d8d8] flex items-center pl-px shrink-0"><M t="层高:4.5m" /></div>
        <div className="w-[98px] bg-[#f5f5f5] border border-[#d8d8d8] flex items-center pl-px shrink-0"><M t="底标高:-0.05m" /></div>
        <div className="w-[48px] bg-[#f5f5f5] border border-[#d8d8d8] flex items-center pl-px shrink-0"><M t="0" /></div>
        <div className="w-[914px] bg-[#f5f5f5] border border-[#d8d8d8] flex items-center pl-px shrink-0"><M t="格式：数量+级别+直径，如：2C25，表示从首跨到尾跨；可以包含架立筋信息，如：2C25+(2C12)" /></div>
        <div className="flex-1 bg-[#f5f5f5] border border-[#d8d8d8] flex items-center pl-px"><M t="147.6 FPS" /></div>
      </div>
      <Taskbar />

      {/* overlays */}
      <Dialog />
      <RedBox cls="left-[794px] top-[353px] w-[185px] h-[30px]" />
      <RedBox cls="left-[1007px] top-[312px] w-[340px] h-[76px]" />
      <RedBox cls="left-[1018px] top-[296px] w-[73px] h-[9px]" />

      {/* IME bar */}
      <div className="absolute left-[814px] top-[3px] w-[185px] h-[23px] bg-white border border-[#bcd5ea] flex items-center pl-[12px] gap-[8px] text-[#1273c9] font-bold text-[14px]">
        <span>中</span>
        <S w={12} h={12} vb="0 0 12 12"><circle cx="3" cy="3" r="1.5" fill="#1273c9" /><path d="M9 6C10 8 9 10 7 11" fill="none" stroke="#1273c9" strokeWidth="2" /></S>
        <S w={16} h={16}><circle cx="8" cy="8" r="7" fill="none" stroke="#1273c9" strokeWidth="1.4" /><circle cx="5.5" cy="6.5" r="1" fill="#1273c9" /><circle cx="10.5" cy="6.5" r="1" fill="#1273c9" /><path d="M5 10C6 12 10 12 11 10" fill="none" stroke="#1273c9" /></S>
        <S w={12} h={17} vb="0 0 12 17"><rect x="3" y="0" width="6" height="11" rx="3" fill="#1273c9" /><path d="M1 7C1 13 11 13 11 7M6 13V16M3 16H9" fill="none" stroke="#1273c9" /></S>
        <S w={16} h={12} vb="0 0 16 12"><rect width="16" height="12" rx="1.5" fill="#1273c9" /><path d="M2 3H14M2 6H14M4 9H12" stroke="#fff" strokeDasharray="1.5 1" /></S>
        <S w={15} h={15} vb="0 0 15 15"><circle cx="6" cy="4" r="3" fill="#b9c7d4" /><path d="M1 12C1 8 11 8 11 12Z" fill="#b9c7d4" /><rect x="7" y="8" width="8" height="6" fill="#fff" stroke="#9fb0c0" /></S>
        <S w={15} h={15} vb="0 0 15 15"><path d="M4 1H11L15 4L13 7L11.5 6V15H3.5V6L2 7L0 4Z" fill="#1273c9" /></S>
        <S w={15} h={15} vb="0 0 15 15"><path d="M14 3L11 6L9 4L12 1C8 0 5 3 6 7L1 12L3 14L8 9C12 10 15 7 14 3Z" fill="#1273c9" /></S>
      </div>
      <div className="absolute left-[794px] top-[6px]">
        <S w={26} h={22} vb="0 0 26 22"><path d="M1 3L23 0L26 19L4 22Z" fill="#f0531c" /><path d="M19 5H8V11H17V17H7" fill="none" stroke="#fff" strokeWidth="3" /></S>
      </div>
      {/* ball */}
      <div className="absolute left-[1013px] top-[-26px] w-[44px] h-[44px] rounded-full bg-[#2fb14a] border-2 border-[#dfe9df] shadow-[0_2px_4px_rgba(0,0,0,0.5)] flex items-end justify-center pb-[5px] text-white text-[11px]">77</div>
    </div>
  );
}
